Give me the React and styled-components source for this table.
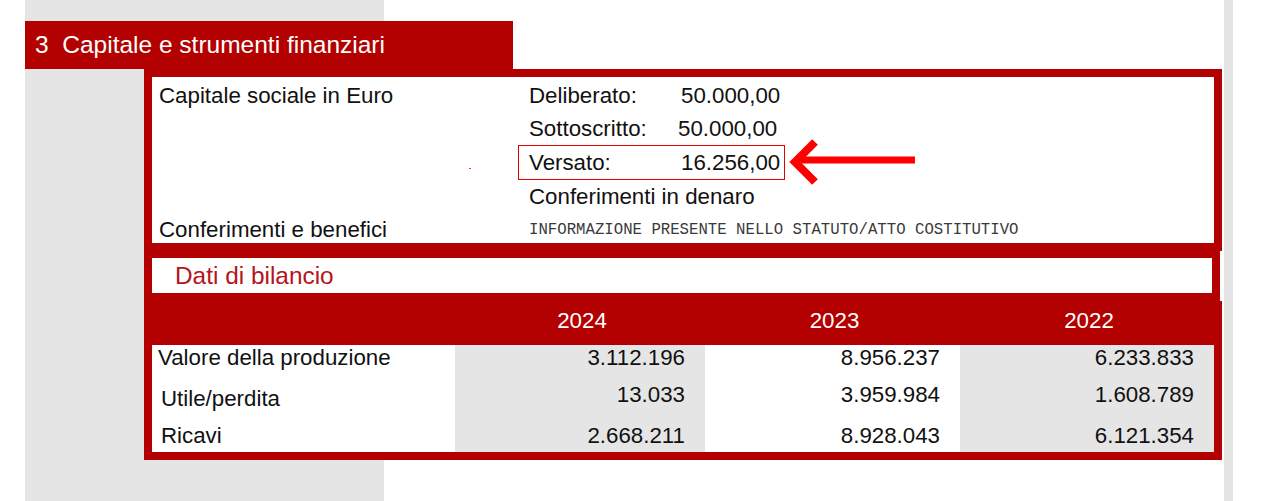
import React from "react";
import styled, { createGlobalStyle } from "styled-components";

const RED = "#b30000";
const GRAY = "#e5e5e5";

const GlobalStyle = createGlobalStyle`
  body {
    margin: 0;
    font-family: "Liberation Sans", Arial, sans-serif;
    color: #111;
  }
`;

const Page = styled.div`
  min-height: 501px;
  padding-top: 21px;
  box-sizing: border-box;
  background: linear-gradient(
    to right,
    #fff 25px,
    ${GRAY} 25px 384px,
    #fff 384px 1224px,
    ${GRAY} 1224px 1233px,
    #fff 1233px
  );
`;

const SectionHeader = styled.div`
  margin-left: 25px;
  width: 488px;
  height: 48px;
  background: ${RED};
  color: #fff;
  font-size: 24.5px;
  white-space: pre;
  display: flex;
  align-items: center;
  padding-left: 10px;
  box-sizing: border-box;
`;

const Content = styled.div`
  margin-left: 144px;
  width: 1078px;
`;

const CapitalBox = styled.div`
  position: relative;
  border: 8px solid ${RED};
  background: #fff;
  display: grid;
  grid-template-columns: 366px 1fr;
  grid-template-rows: 33px 33px 35px 33px 30px;
  padding-top: 2px;
  font-size: 22.3px;
`;

const SideLabel = styled.div`
  grid-column: 1;
  grid-row: ${(p) => p.$row};
  padding-left: 7px;
  display: flex;
  align-items: center;
  padding-top: ${(p) => p.$dy || 0}px;
`;

const AmountRow = styled.div`
  grid-column: 2;
  display: flex;
  align-items: center;
  padding-left: 11px;
`;

const AmountLabel = styled.span`
  width: ${(p) => p.$w || 152}px;
`;

const HighlightRow = styled.div`
  grid-column: 2;
  position: relative;
  width: 267px;
  box-sizing: border-box;
  border: 1px solid #e60000;
  display: flex;
  align-items: center;
  padding-left: 10px;
`;

const Arrow = styled.svg`
  position: absolute;
  left: calc(100% + 3px);
  top: -7px;
`;

const Speck = styled.span`
  position: absolute;
  left: 317px;
  top: 91px;
  width: 2px;
  height: 1px;
  background: #f33;
`;

const StatuteNote = styled.div`
  grid-column: 2;
  padding-left: 11px;
  padding-top: 3px;
  display: flex;
  align-items: center;
  font-family: "Liberation Mono", "Courier New", monospace;
  font-size: 15.7px;
  color: #3a3a3a;
`;

const TitleBox = styled.div`
  width: 1076px;
  box-sizing: border-box;
  border: 8px solid ${RED};
  border-top-width: 7px;
  background: #fff;
  height: 50px;
  display: flex;
  align-items: center;
  padding-left: 23px;
  font-size: 24.4px;
  color: #b5141b;
`;

const Table = styled.div`
  border: 8px solid ${RED};
  border-top: 0;
  display: grid;
  grid-template-columns: 303px 250px 255px 1fr;
  font-size: 22.3px;
`;

const HeadCell = styled.div`
  background: ${RED};
  color: #fff;
  height: 44px;
  padding-bottom: 4px;
  padding-left: 4px;
  box-sizing: border-box;
  display: flex;
  align-items: center;
  justify-content: center;
`;

const LabelCell = styled.div`
  height: ${(p) => p.$h}px;
  display: flex;
  align-items: center;
  padding-left: ${(p) => p.$x || 7}px;
  padding-top: ${(p) => p.$dy || 0}px;
  box-sizing: border-box;
  background: #fff;
`;

const NumberCell = styled.div`
  height: ${(p) => p.$h}px;
  display: flex;
  align-items: center;
  justify-content: flex-end;
  padding-right: 20px;
  background: ${(p) => (p.$shade ? GRAY : "#fff")};
`;

const years = ["2024", "2023", "2022"];

const rows = [
  { label: "Valore della produzione", h: 25, x: 6, values: ["3.112.196", "8.956.237", "6.233.833"] },
  { label: "Utile/perdita", h: 50, x: 9, dy: 8, values: ["13.033", "3.959.984", "1.608.789"] },
  { label: "Ricavi", h: 32, x: 9, values: ["2.668.211", "8.928.043", "6.121.354"] },
];

export default function App() {
  return (
    <>
      <GlobalStyle />
      <Page>
        <SectionHeader>3  Capitale e strumenti finanziari</SectionHeader>
        <Content>
          <CapitalBox>
            <Speck />
            <SideLabel $row={1}>Capitale sociale in Euro</SideLabel>
            <SideLabel $row={5} $dy={4}>Conferimenti e benefici</SideLabel>
            <AmountRow style={{ gridRow: 1 }}>
              <AmountLabel>Deliberato:</AmountLabel>
              <span>50.000,00</span>
            </AmountRow>
            <AmountRow style={{ gridRow: 2 }}>
              <AmountLabel $w={149}>Sottoscritto:</AmountLabel>
              <span>50.000,00</span>
            </AmountRow>
            <HighlightRow style={{ gridRow: 3 }}>
              <AmountLabel>Versato:</AmountLabel>
              <span>16.256,00</span>
              <Arrow width="132" height="48" viewBox="0 0 132 48">
                <line x1="14" y1="21" x2="128" y2="21" stroke="#f00" strokeWidth="7" />
                <polyline
                  points="28,3 8,23 28,43"
                  fill="none"
                  stroke="#f00"
                  strokeWidth="8"
                />
              </Arrow>
            </HighlightRow>
            <AmountRow style={{ gridRow: 4 }}>Conferimenti in denaro</AmountRow>
            <StatuteNote style={{ gridRow: 5 }}>
              INFORMAZIONE PRESENTE NELLO STATUTO/ATTO COSTITUTIVO
            </StatuteNote>
          </CapitalBox>
          <TitleBox>Dati di bilancio</TitleBox>
          <Table>
            <HeadCell />
            {years.map((y) => (
              <HeadCell key={y}>{y}</HeadCell>
            ))}
            {rows.map((r) => (
              <React.Fragment key={r.label}>
                <LabelCell $h={r.h} $x={r.x} $dy={r.dy}>
                  {r.label}
                </LabelCell>
                {r.values.map((v, i) => (
                  <NumberCell key={i} $h={r.h} $shade={i !== 1}>
                    {v}
                  </NumberCell>
                ))}
              </React.Fragment>
            ))}
          </Table>
        </Content>
      </Page>
    </>
  );
}
